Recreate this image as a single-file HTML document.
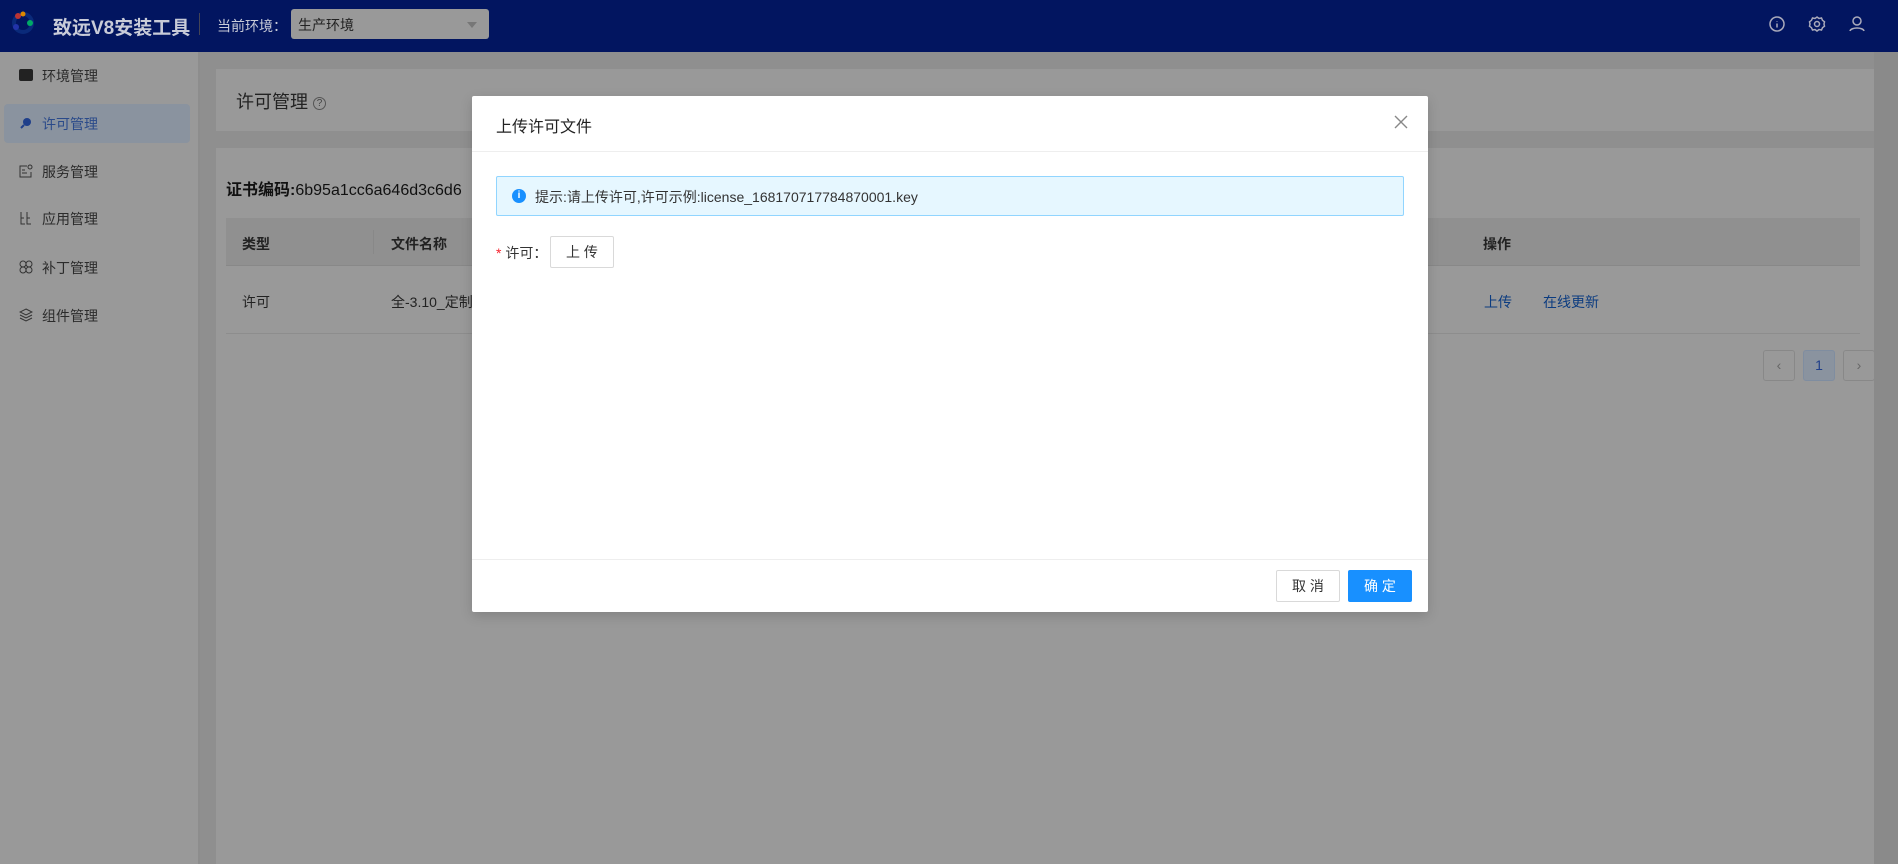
<!DOCTYPE html>
<html><head><meta charset="utf-8"><style>
*{margin:0;padding:0;box-sizing:border-box}
body{width:1898px;height:864px;overflow:hidden;position:relative;background:#8f8f8f;font-family:"Liberation Sans","Noto Sans CJK SC",sans-serif;font-size:14px;color:#1a1a1a}
.abs{position:absolute}
.hdr{left:0;top:0;width:1898px;height:52px;background:#021560}
.side{left:0;top:52px;width:200px;height:812px;background:#999;border-right:2px solid #8d8d8d}
.item{position:absolute;left:4px;width:186px;height:39px;font-size:14px;color:#2b2b2b;display:flex;align-items:center;padding-left:38px}
.ico{position:absolute;left:15px;width:14px;height:14px}
.card{background:#999}
</style></head><body>
<div class="abs hdr">
 <svg class="abs" style="left:10px;top:10px" width="26" height="26" viewBox="0 0 26 26"><circle cx="13" cy="13" r="9" fill="none" stroke="#0a2a7a" stroke-width="4"/><circle cx="8" cy="6" r="3" fill="#b33"/><circle cx="13" cy="4" r="2.5" fill="#d80"/><circle cx="20" cy="13" r="3" fill="#0a6"/><circle cx="6" cy="17" r="3" fill="#23a"/></svg>
 <div class="abs" style="left:53px;top:13px;font-size:19px;font-weight:bold;color:#c8cbd8">致远V8安装工具</div>
 <div class="abs" style="left:199px;top:13px;width:1px;height:22px;background:#445"></div>
 <div class="abs" style="left:217px;top:16px;font-size:14px;color:#c8cbd8">当前环境：</div>
 <div class="abs" style="left:291px;top:9px;width:198px;height:30px;background:#999;border-radius:3px;color:#222;font-size:14px;padding:6px 7px">生产环境<span class="abs" style="right:12px;top:13px;border:5px solid transparent;border-top:6px solid #777"></span></div>
 <svg class="abs" style="left:1769px;top:15px" width="100" height="20" viewBox="0 0 100 20" fill="none" stroke="#aab" stroke-width="1.5"><circle cx="8" cy="9" r="7"/><path d="M8 6v0.5M8 8.5v4"/><circle cx="48" cy="9" r="2.5"/><path d="M48 2l2 1.5 2.5-.5 1 2.3 2 1.5-.5 2.2.5 2.2-2 1.5-1 2.3-2.5-.5-2 1.5-2-1.5-2.5.5-1-2.3-2-1.5.5-2.2-.5-2.2 2-1.5 1-2.3 2.5.5z"/><circle cx="88" cy="6" r="4"/><path d="M81 16c1-4 13-4 14 0"/></svg>
</div>
<div class="abs side">
 <div class="item" style="top:4px"><span class="ico" style="top:13px;background:#222;border-radius:2px;height:12px"></span>环境管理</div>
 <div class="item" style="top:52px;background:#8a939f;border-radius:4px;color:#2a4a8a"><svg class="ico" style="top:12px" viewBox="0 0 14 14"><circle cx="8" cy="6" r="4" fill="#1f3f8a"/><path d="M5 9L2 12" stroke="#1f3f8a" stroke-width="2"/></svg>许可管理</div>
 <div class="item" style="top:100px"><svg class="ico" style="top:12px" viewBox="0 0 14 14" fill="none" stroke="#333"><path d="M8 2H1v11h11V8M3 6h3M3 9h5"/><circle cx="11" cy="3" r="2"/></svg>服务管理</div>
 <div class="item" style="top:147px"><svg class="ico" style="top:12px" viewBox="0 0 14 14" fill="none" stroke="#333"><path d="M2 1v12h4M2 7h3M8 1v12h4M8 7h3"/></svg>应用管理</div>
 <div class="item" style="top:196px"><svg class="ico" style="top:12px" viewBox="0 0 14 14" fill="none" stroke="#333"><circle cx="4" cy="4" r="3"/><circle cx="10" cy="4" r="3"/><circle cx="4" cy="10" r="3"/><circle cx="10" cy="10" r="3"/></svg>补丁管理</div>
 <div class="item" style="top:244px"><svg class="ico" style="top:12px" viewBox="0 0 14 14" fill="none" stroke="#333"><path d="M7 1l6 3-6 3-6-3zM1 7l6 3 6-3M1 10l6 3 6-3"/></svg>组件管理</div>
</div>
<div class="abs card" style="left:216px;top:69px;width:1658px;height:62px"><div class="abs" style="left:20px;top:19px;font-size:18px;color:#222">许可管理 <span style="display:inline-block;width:13px;height:13px;border:1px solid #555;border-radius:50%;font-size:10px;text-align:center;line-height:12px;color:#444;vertical-align:2px">?</span></div></div>
<div class="abs card" style="left:216px;top:148px;width:1658px;height:716px">
 <div class="abs" style="left:10px;top:28px;font-size:16px;color:#111"><b>证书编码:</b>6b95a1cc6a646d3c6d6</div>
 <div class="abs" style="left:10px;top:70px;width:1634px;height:48px;background:#909090;border-bottom:1px solid #888"></div>
 <div class="abs" style="left:157px;top:82px;width:1px;height:24px;background:#888"></div>
 <div class="abs" style="left:26px;top:86px;font-weight:bold;color:#222">类型</div>
 <div class="abs" style="left:175px;top:86px;font-weight:bold;color:#222">文件名称</div>
 <div class="abs" style="left:1267px;top:86px;font-weight:bold;color:#222">操作</div>
 <div class="abs" style="left:26px;top:144px;color:#222">许可</div>
 <div class="abs" style="left:175px;top:144px;color:#222">全-3.10_定制</div>
 <div class="abs" style="left:1268px;top:144px;color:#0c3c80">上传</div>
 <div class="abs" style="left:1327px;top:144px;color:#0c3c80">在线更新</div>
 <div class="abs" style="left:10px;top:185px;width:1634px;height:1px;background:#8d8d8d"></div>
 <div class="abs" style="left:1547px;top:202px;width:32px;height:31px;border:1px solid #888;border-radius:3px;color:#666;text-align:center;line-height:29px">‹</div>
 <div class="abs" style="left:1587px;top:202px;width:32px;height:31px;border:1px solid #7f8da0;background:#8a939f;border-radius:3px;color:#1f3f8a;text-align:center;line-height:29px">1</div>
 <div class="abs" style="left:1627px;top:202px;width:32px;height:31px;border:1px solid #888;border-radius:3px;color:#666;text-align:center;line-height:29px">›</div>
</div>
<div class="abs" style="left:1874px;top:52px;width:24px;height:812px;background:#8a8a8a"></div>
<div class="abs" style="left:472px;top:96px;width:956px;height:516px;background:#fff;border-radius:2px;box-shadow:0 4px 12px rgba(0,0,0,.15)">
 <div class="abs" style="left:24px;top:17px;font-size:16px;color:#222">上传许可文件</div>
 <svg class="abs" style="left:922px;top:19px" width="14" height="14" viewBox="0 0 14 14" stroke="#888" stroke-width="1.4"><path d="M1 1l12 12M13 1L1 13"/></svg>
 <div class="abs" style="left:0;top:55px;width:956px;height:1px;background:#eee"></div>
 <div class="abs" style="left:24px;top:80px;width:908px;height:40px;background:#e6f7ff;border:1px solid #91d5ff;border-radius:2px">
  <span class="abs" style="left:15px;top:12px;width:14px;height:14px;border-radius:50%;background:#1890ff;color:#fff;font-size:10px;font-weight:bold;text-align:center;line-height:14px">i</span>
  <span class="abs" style="left:38px;top:10px;font-size:14px;color:#333">提示:请上传许可,许可示例:license_168170717784870001.key</span>
 </div>
 <div class="abs" style="left:24px;top:147px;font-size:14px;color:#333"><span style="color:#f5222d">*</span> 许可：</div>
 <div class="abs" style="left:78px;top:140px;width:64px;height:32px;border:1px solid #d9d9d9;border-radius:2px;text-align:center;line-height:30px;color:#333">上 传</div>
 <div class="abs" style="left:0;top:463px;width:956px;height:1px;background:#eee"></div>
 <div class="abs" style="left:804px;top:474px;width:64px;height:32px;border:1px solid #d9d9d9;border-radius:2px;text-align:center;line-height:30px;color:#333">取 消</div>
 <div class="abs" style="left:876px;top:474px;width:64px;height:32px;background:#1890ff;border-radius:2px;text-align:center;line-height:32px;color:#fff">确 定</div>
</div>
</body></html>
